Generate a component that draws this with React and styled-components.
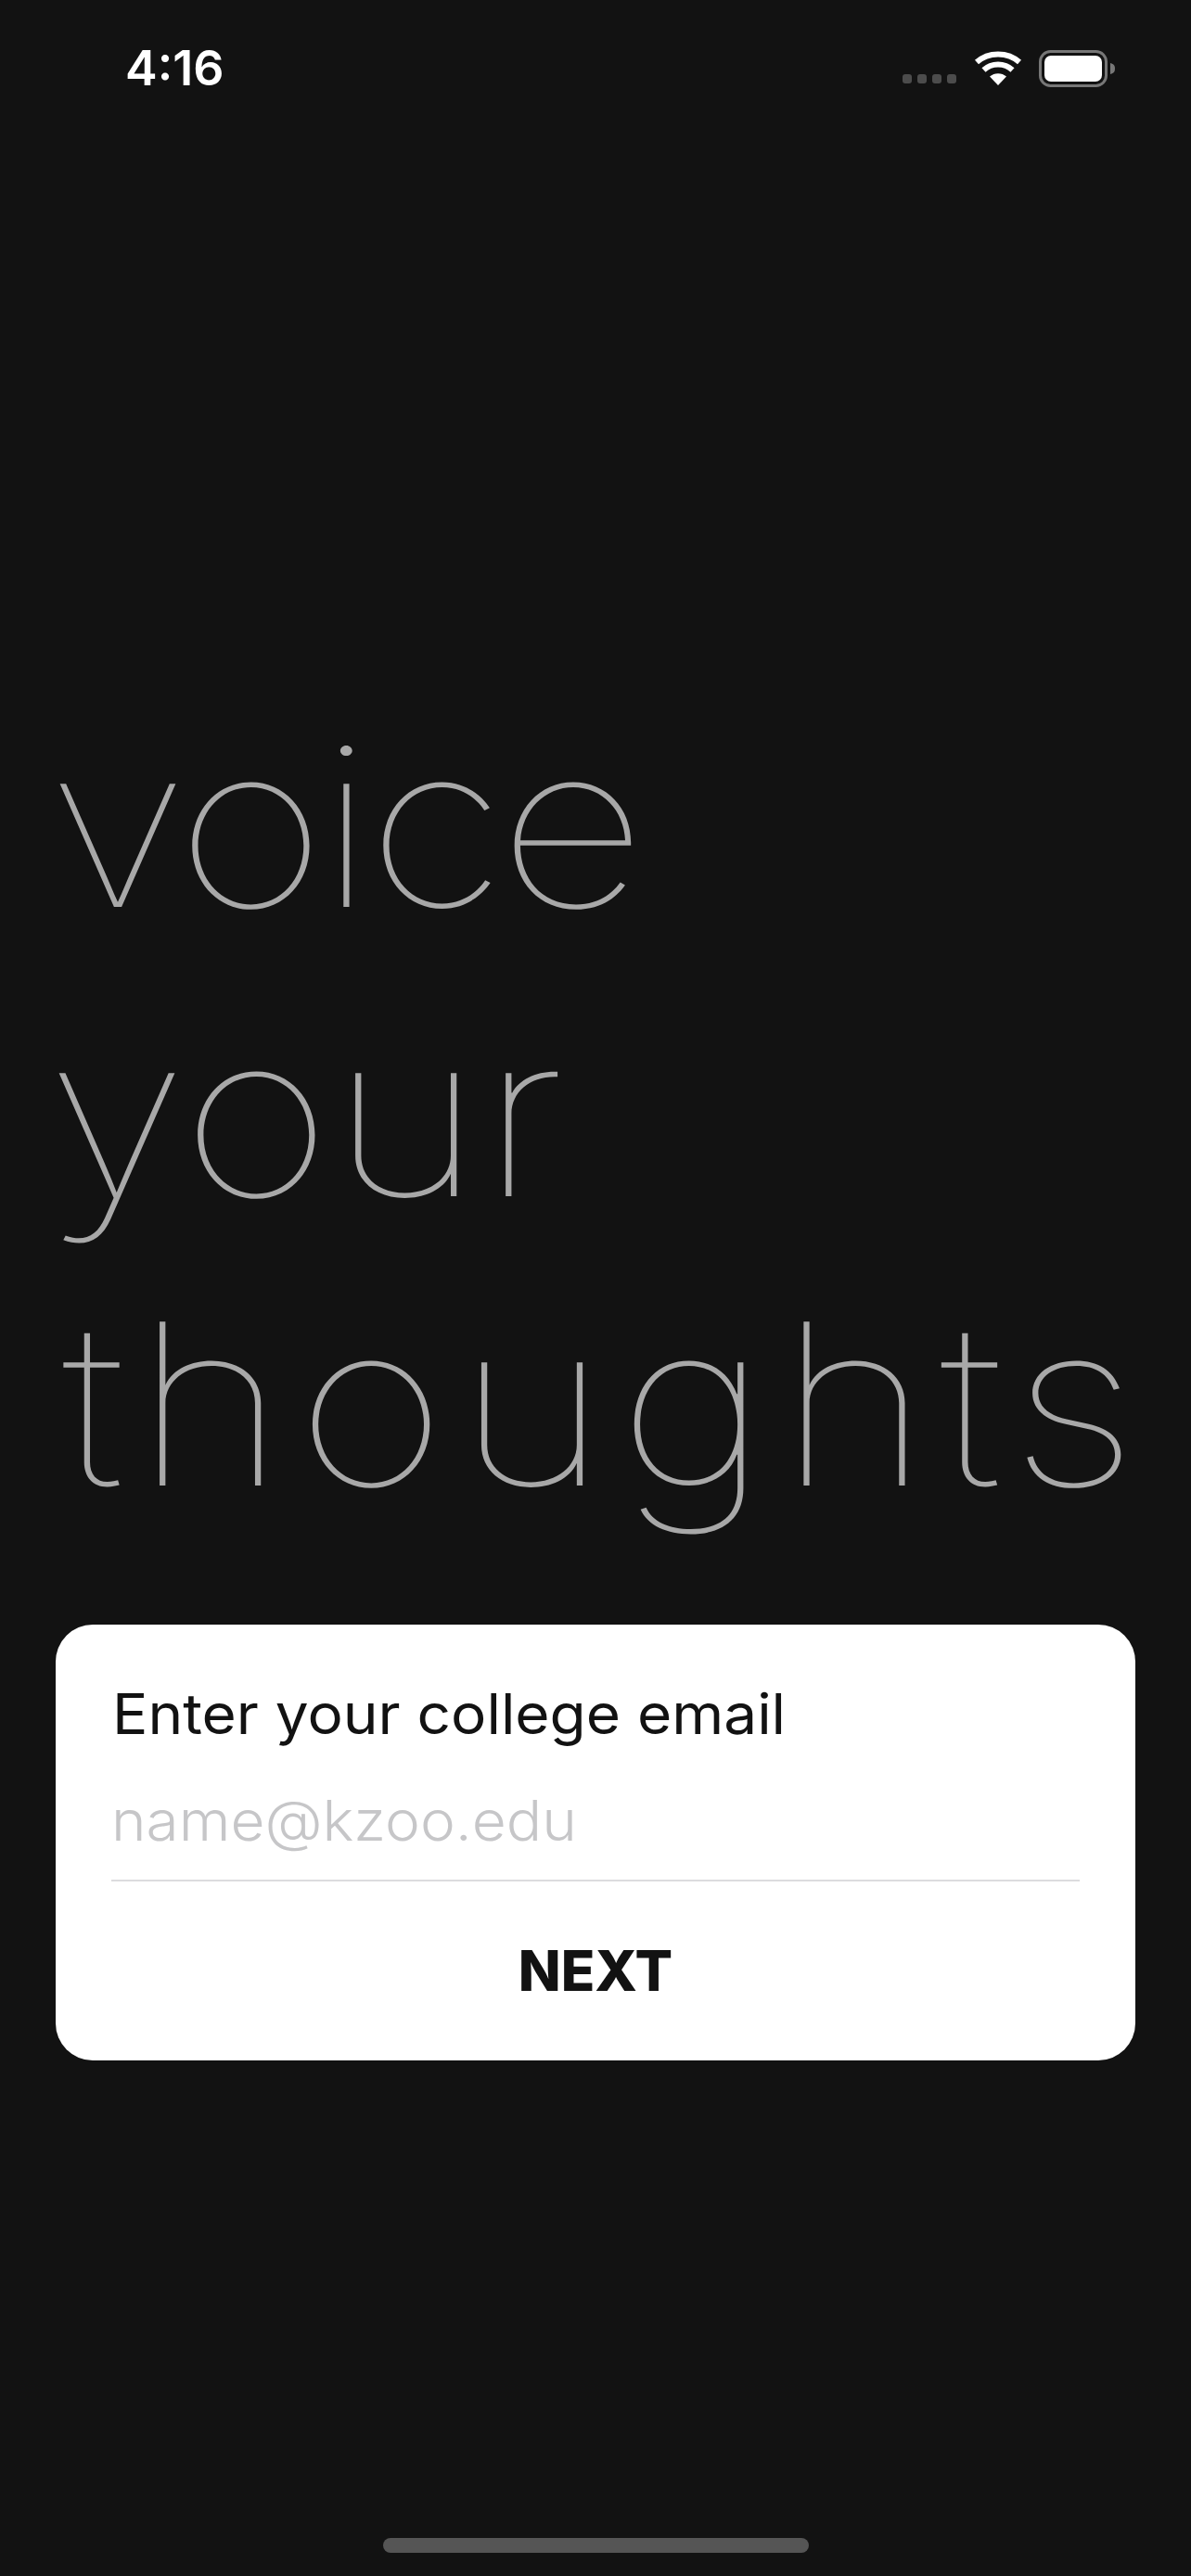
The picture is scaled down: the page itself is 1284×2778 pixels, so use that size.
import React from 'react'
import styled, { createGlobalStyle } from 'styled-components'

const Global = createGlobalStyle`
  html, body { margin: 0; padding: 0; background: #121212; }
`

const Page = styled.div`
  width: 1284px;
  height: 2778px;
  background: #121212;
  display: flex;
  flex-direction: column;
  overflow: hidden;
  font-family: Inter, "Liberation Sans", sans-serif;
`

const StatusBar = styled.div`
  height: 144px;
  box-sizing: border-box;
  padding: 44px 80px 0 135px;
  display: flex;
  justify-content: space-between;
  align-items: flex-start;
`

const Clock = styled.div`
  font-size: 52px;
  line-height: 60px;
  font-weight: 600;
  color: #fff;
`

const StatusIcons = styled.div`
  display: flex;
  align-items: flex-start;
  padding-top: 10px;
`

const Hero = styled.h1`
  margin: 590px 0 0;
  padding-left: 60px;
  font-size: 243px;
  line-height: 312px;
  font-weight: 100;
  color: #a8a8a8;
`

// the source font is much rounder than Inter, so the lines get stretched
const HeroLine = styled.div`
  height: 312px;
  white-space: nowrap;
  transform: scaleX(1.15);
  transform-origin: left center;
  margin-left: ${props => props.$shift}px;
  letter-spacing: ${props => props.$spacing}px;
`

const Card = styled.form`
  margin: 82px 60px 0;
  height: 470px;
  box-sizing: border-box;
  padding: 60px 60px 0;
  background: #fff;
  border-radius: 40px;
  display: flex;
  flex-direction: column;
`

const Label = styled.div`
  font-size: 60px;
  line-height: 72px;
  color: #121212;
  padding-left: 1px;
  white-space: nowrap;
  transform: scaleX(1.065);
  transform-origin: left center;
`

const Field = styled.div`
  margin-top: 43px;
  height: 100px;
  border-bottom: 2px solid #dcdcde;
`

const Placeholder = styled.div`
  font-size: 60px;
  line-height: 72px;
  font-weight: 300;
  color: #c6c6c8;
  white-space: nowrap;
  transform: scaleX(1.065);
  transform-origin: left center;
`

const NextButton = styled.button`
  margin-top: 61px;
  border: 0;
  padding: 0;
  background: none;
  font-family: inherit;
  font-size: 60px;
  line-height: 70px;
  font-weight: 800;
  color: #121212;
  text-align: center;
`

const HomeIndicator = styled.div`
  margin: auto auto 25px;
  width: 459px;
  height: 16px;
  border-radius: 8px;
  background: #555;
`

const Dots = () => (
  <svg width="60" height="40" viewBox="0 0 60 40" style={{ marginRight: 17 }}>
    {[0, 16, 32, 48].map(x => (
      <rect key={x} x={x} y="26" width="10" height="10" rx="3" fill="#4c4c4c" />
    ))}
  </svg>
)

const Wifi = () => (
  <svg width="52" height="40" viewBox="0 0 52 40" style={{ marginRight: 18 }}>
    <path d="M26 38 L17 28.5 C22 24 30 24 35 28.5 Z" fill="#fff" />
    <path d="M10.5 21.5 C19 13.5 33 13.5 41.5 21.5" fill="none" stroke="#fff" strokeWidth="6" />
    <path d="M3 13 C15.500 1.500 36.500 1.500 49 13" fill="none" stroke="#fff" strokeWidth="6" />
  </svg>
)

const Battery = () => (
  <svg width="84" height="40" viewBox="0 0 84 40">
    <rect x="1.500" y="1.500" width="71" height="37" rx="11" fill="none" stroke="#777" strokeWidth="3" />
    <rect x="6" y="6" width="62" height="28" rx="7" fill="#fff" />
    <path d="M77 14 C81 15 82 17 82 20 C82 23 81 25 77 26 Z" fill="#777" />
  </svg>
)

export default function App() {
  return (
    <Page>
      <Global />
      <StatusBar>
        <Clock>4:16</Clock>
        <StatusIcons>
          <Dots />
          <Wifi />
          <Battery />
        </StatusIcons>
      </StatusBar>
      <Hero>
        <HeroLine $shift={-9} $spacing={-7}>voice</HeroLine>
        <HeroLine $shift={-10} $spacing={-1}>your</HeroLine>
        <HeroLine $shift={7} $spacing={9.500}>thoughts</HeroLine>
      </Hero>
      <Card>
        <Label>Enter your college email</Label>
        <Field>
          <Placeholder>name@kzoo.edu</Placeholder>
        </Field>
        <NextButton type="button">NEXT</NextButton>
      </Card>
      <HomeIndicator />
    </Page>
  )
}
